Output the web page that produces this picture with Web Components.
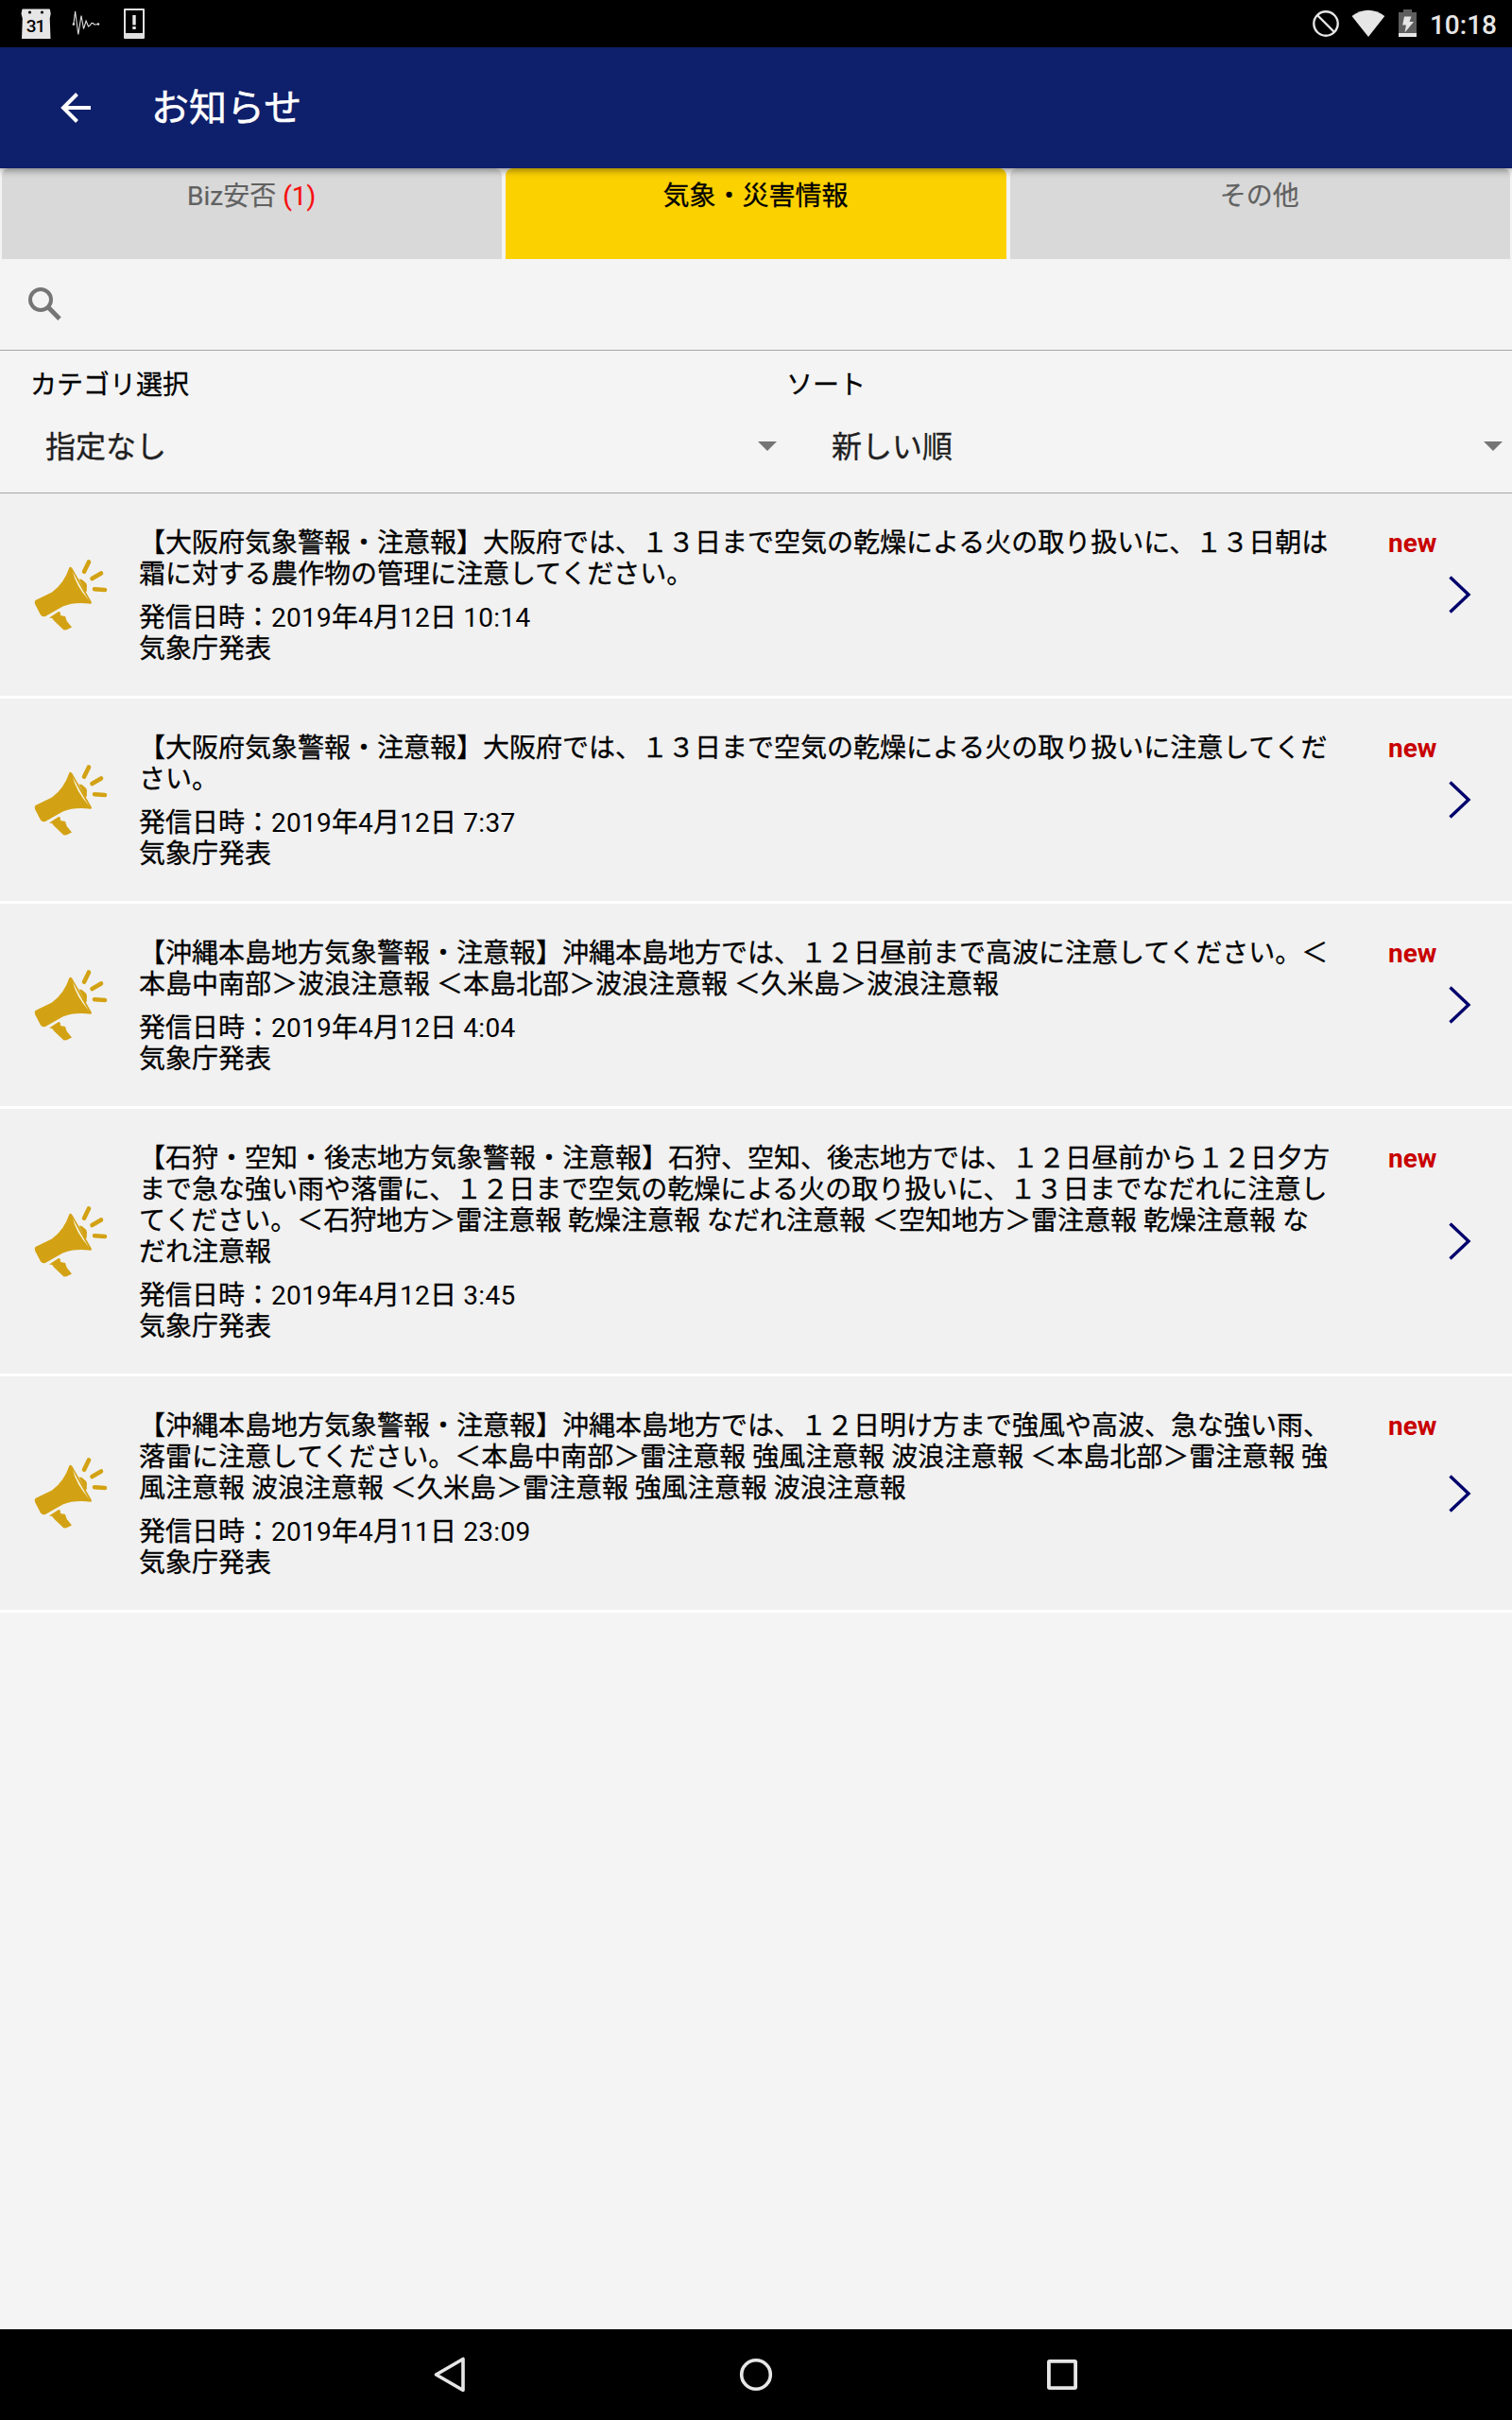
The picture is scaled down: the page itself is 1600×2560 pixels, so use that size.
<!DOCTYPE html>
<html lang="ja">
<head>
<meta charset="utf-8">
<title>お知らせ</title>
<style>
html,body{margin:0;padding:0}
body{width:1600px;height:2560px;overflow:hidden;background:#f4f4f4;font-family:Roboto,"Noto Sans CJK JP",sans-serif;color:#000;text-spacing-trim:space-all}
</style>
</head>
<body>
<notice-app></notice-app>
<script>
const define = (name, html, setup) => customElements.define(name, class extends HTMLElement {
  constructor() {
    super();
    const t = document.createElement('template');
    t.innerHTML = html;
    this.attachShadow({mode: 'open'}).append(t.content.cloneNode(true));
  }
  connectedCallback() { if (setup) setup(this, this.shadowRoot); }
});

define('status-bar', `
<style>
:host{display:flex;height:50px;background:#000;align-items:center;justify-content:space-between;box-sizing:border-box;padding:0 16px 0 22px;color:#e6e6e6}
svg{display:block}
div{display:flex;align-items:center}
.time{font:500 28px/50px Roboto,sans-serif;padding-top:3px;margin-left:13px}
</style>
<div>
<svg width="132" height="50" viewBox="22 0 132 50">
<path d="M24 9.5h28q1 0 1 1l.7 4-1 5 .8 21.5H23l.8-21.5-1.3-5 .8-4q0-1 .7-1z" fill="#e6e6e6"/>
<circle cx="31.5" cy="13" r="1.6"/><circle cx="44.5" cy="13" r="1.6"/>
<text x="37.500" y="34.2" font-family="Roboto" font-size="19" font-weight="500" text-anchor="middle" letter-spacing="-1" fill="#000">31</text>
<path d="M77 26.5l1-2 1.6-12.500 3.200 24.500 3.200-20 2.500 14 2.600-8.500 2.500 6q2-.500 3.200-3.500 1.500-.500 2.500 1 1.500 1 4.500-.300" fill="none" stroke="#e0e0e0" stroke-width="1.100"/>
<circle cx="78" cy="25.500" r="1.200" fill="#e0e0e0"/><circle cx="104" cy="25.500" r="1.200" fill="#e0e0e0"/>
<path fill-rule="evenodd" fill="#e0e0e0" d="M132 9h20q1 0 1 1v30q0 1-1 1h-20q-1 0-1-1V10q0-1 1-1zm1 2v24h18V11z"/>
<path fill="#e6e6e6" d="M140.300 16h3.400v10.500h-3.400zM140.300 28h3.400v3h-3.400z"/>
</svg></div>
<div>
<svg width="112" height="50" viewBox="1388 0 112 50">
<circle cx="1403" cy="25" r="12.700" fill="none" stroke="#e6e6e6" stroke-width="2.400"/><path d="M1394 16l18 18" stroke="#e6e6e6" stroke-width="2.400"/>
<path d="M1430.500 17q17.300-12.500 34.800 0L1448 39z" fill="#e6e6e6"/>
<path d="M1485 10h9v3h5v22h-19V13h5z" fill="#5e5e5e"/><path d="M1480 35h19v4h-19z" fill="#e6e6e6"/>
<path d="M1486 17.500h7.500l-2 5.500h4.500l-9.500 11.500 1.500-8h-3.800z" fill="#e6e6e6"/>
</svg>
<span class="time">10:18</span></div>`);

define('app-header', `
<style>
:host{display:flex;height:128px;align-items:center;background:#0e1f6b;color:#fff;box-shadow:0 2px 8px rgba(0,0,0,.45);position:relative;z-index:1;box-sizing:border-box;padding-left:64px}
svg{display:block;margin-right:64px}
span{font-size:40px;line-height:56px;padding-top:2px;-webkit-text-stroke:.5px}
</style>
<svg width="32" height="32" viewBox="0 0 32 32"><path d="M32 16H3M17.500 1.500L3 16l14.500 14.500" fill="none" stroke="#fff" stroke-width="4"/></svg>
<span><slot></slot></span>`);

define('notice-tab', `
<style>
:host{display:block;height:96px;box-sizing:border-box;background:#d9d9d9;color:#616161;border-radius:8px 8px 0 0;text-align:center;font-size:28px;line-height:33px;padding:13px 1px 0 0;-webkit-text-stroke:.2px}
:host([selected]){background:#fcd100;color:#000;-webkit-text-stroke:.3px}
b{font-weight:400;color:#f50f0f;white-space:pre}
:host(:not([count])) b{display:none}
</style><slot></slot><b></b>`, (el, root) => {
  if (el.hasAttribute('count')) root.querySelector('b').textContent = ` (${el.getAttribute('count')})`;
});

define('search-bar', `
<style>:host{display:flex;align-items:center;height:97px;box-sizing:border-box;border-bottom:1px solid #a6a6a6;padding-left:30px}svg{display:block}</style>
<svg width="35" height="36" viewBox="0 0 35 36"><circle cx="13" cy="13" r="11" fill="none" stroke="#757575" stroke-width="4"/><path d="M21.500 21.500l11.500 11.700" stroke="#757575" stroke-width="4.800"/></svg>`);

define('select-field', `
<style>
:host{display:block;flex:1;box-sizing:border-box;padding-top:20px}
label{display:block;font-size:28px;line-height:33px;-webkit-text-stroke:.3px}
.v{display:flex;align-items:center;justify-content:space-between;height:48px;margin-top:22px;padding-left:var(--indent,16px);font-size:32px;color:#212121;-webkit-text-stroke:.3px}
svg{display:block;margin-top:4px}
</style>
<label></label><div class="v"><slot></slot><svg width="20" height="10"><path d="M0 0h20L10 10z" fill="#757575"/></svg></div>`,
(el, root) => { root.querySelector('label').textContent = el.getAttribute('label'); });

define('megaphone-icon', `
<style>:host{display:block}svg{display:block}</style>
<svg width="80" height="78" viewBox="36 60 80 78" fill="#d3a214">
<path d="M37.500 105L55 96.500Q68 87 73.300 70.500q1-1.500 3 .500l20.500 35.800q.700 1.800-1 2Q79 106.500 66.500 111.500L48 122q-3.500 1-5-1.500L37 109q-.800-2.800.5-4z"/>
<path d="M83.500 82.500q4 .200 5.300 2.500 4 2 3 7 .700 3-1.300 5z"/>
<path d="M77 75Q80 89 94.200 105.500 86 92.500 77 75z" fill="#fbf4dc"/>
<path d="M52 123.500l10-6.500 1.800.800.200 3.200 5 1 1.700 5 5.300 6.500-5.500 2.700-3 .200-10.500-10-1.800-2.300z"/>
<path d="M94 64.500l-5 10.300M107 76.500l-9.500 5.500M100 93.200l11 .800" fill="none" stroke="#d3a214" stroke-width="4.600" stroke-linecap="round"/>
</svg>`);

define('notice-row', `
<style>
:host{display:flex;align-items:center;background:#f1f1f1;border-bottom:3px solid #fff;box-sizing:border-box;padding:34px 0}
megaphone-icon{margin:-1px 0 0 36px;width:80px}
.body{margin:0 0 -1px 31px;padding-top:2px;width:1293px;font-size:28px;line-height:33px;white-space:pre;-webkit-text-stroke:.3px}
.meta{margin-top:13px}
.date span{letter-spacing:.27px;-webkit-text-stroke:0}
.tag{align-self:flex-start;width:93px;padding-left:29px;box-sizing:border-box;font:700 28px/33px Roboto,sans-serif;color:#c80000;padding-top:2px}
svg{display:block}
</style>
<megaphone-icon></megaphone-icon>
<div class="body"><div><slot></slot></div><div class="meta"><div class="date"></div><div>気象庁発表</div></div></div>
<div class="tag">new</div>
<svg width="24" height="40" viewBox="0 0 24 40"><path d="M1.500 1.500L21 20 1.500 38.500" fill="none" stroke="#00006c" stroke-width="3.400"/></svg>`,
(el, root) => {
  root.querySelector('.date').innerHTML =
    '発信日時：' + el.getAttribute('date').replace(/[\d: ]+/g, '<span>$&</span>');
});

define('nav-bar', `
<style>:host{display:flex;height:96px;background:#000;align-items:center;justify-content:center;gap:284px}svg{display:block}</style>
<svg width="40" height="40" viewBox="0 0 40 40"><path d="M34 3.500v33L5.500 20z" fill="none" stroke="#e6e6e6" stroke-width="3.600" stroke-linejoin="round"/></svg>
<svg width="40" height="40" viewBox="0 0 40 40"><circle cx="20" cy="20" r="15.300" fill="none" stroke="#e6e6e6" stroke-width="3.600"/></svg>
<svg width="40" height="40" viewBox="0 0 40 40"><rect x="5.900" y="5.900" width="28.200" height="28.200" rx=".8" fill="none" stroke="#e6e6e6" stroke-width="3.800"/></svg>`);

define('notice-app', `
<style>
:host{display:flex;flex-direction:column;height:2560px}
.tabs{display:grid;grid-template-columns:repeat(3,1fr);gap:4px;padding:0 2px}
.filters{display:flex;height:151px;box-sizing:border-box;border-bottom:1px solid #a6a6a6;padding:0 10px 0 32px}
.filters select-field:first-child{flex:0 0 790px;margin-right:10px}
.filters select-field:last-child{--indent:48px}
main{flex:1}
</style>
<status-bar></status-bar>
<app-header>お知らせ</app-header>
<div class="tabs"><notice-tab count="1">Biz安否</notice-tab><notice-tab selected>気象・災害情報</notice-tab><notice-tab>その他</notice-tab></div>
<search-bar></search-bar>
<div class="filters"><select-field label="カテゴリ選択">指定なし</select-field><select-field label="ソート">新しい順</select-field></div>
<main>
<notice-row date="2019年4月12日 10:14">【大阪府気象警報・注意報】大阪府では、１３日まで空気の乾燥による火の取り扱いに、１３日朝は
霜に対する農作物の管理に注意してください。</notice-row>
<notice-row date="2019年4月12日 7:37">【大阪府気象警報・注意報】大阪府では、１３日まで空気の乾燥による火の取り扱いに注意してくだ
さい。</notice-row>
<notice-row date="2019年4月12日 4:04">【沖縄本島地方気象警報・注意報】沖縄本島地方では、１２日昼前まで高波に注意してください。＜
本島中南部＞波浪注意報 ＜本島北部＞波浪注意報 ＜久米島＞波浪注意報</notice-row>
<notice-row date="2019年4月12日 3:45">【石狩・空知・後志地方気象警報・注意報】石狩、空知、後志地方では、１２日昼前から１２日夕方
まで急な強い雨や落雷に、１２日まで空気の乾燥による火の取り扱いに、１３日までなだれに注意し
てください。＜石狩地方＞雷注意報 乾燥注意報 なだれ注意報 ＜空知地方＞雷注意報 乾燥注意報 な
だれ注意報</notice-row>
<notice-row date="2019年4月11日 23:09">【沖縄本島地方気象警報・注意報】沖縄本島地方では、１２日明け方まで強風や高波、急な強い雨、
落雷に注意してください。＜本島中南部＞雷注意報 強風注意報 波浪注意報 ＜本島北部＞雷注意報 強
風注意報 波浪注意報 ＜久米島＞雷注意報 強風注意報 波浪注意報</notice-row>
</main>
<nav-bar></nav-bar>`);
</script>
</body>
</html>
